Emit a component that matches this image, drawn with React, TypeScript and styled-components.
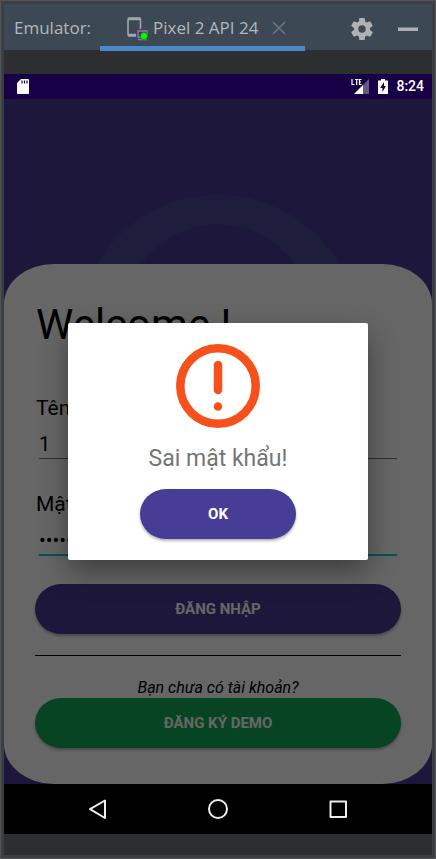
import React, { useState } from "react";
import styled, { createGlobalStyle } from "styled-components";

const GlobalStyle = createGlobalStyle`
  *, *::before, *::after { box-sizing: border-box; }
  body { margin: 0; background: #3c3f41; }
  button, input { font-family: inherit; }
`;

const Window = styled.div`
  display: flex;
  flex-direction: column;
  min-height: 100vh;
  padding: 3px;
  border: 1px solid #515456;
  background: #3c3f41;
  font-family: Roboto, "Noto Sans", sans-serif;
`;

const Toolbar = styled.header`
  display: flex;
  align-items: stretch;
  height: 46px;
  padding: 0 13px 0 10px;
  background: #3d4855;
  color: #b4b7ba;
  font: 400 17px/24px "Open Sans", "Noto Sans", sans-serif;
`;

const ToolTitle = styled.span`
  align-self: center;
  width: 86px;
  padding-top: 2px;
  white-space: nowrap;
`;

const Tab = styled.div`
  display: flex;
  align-items: center;
  width: 205px;
  height: 47px;
  padding: 5px 0 0 26px;
  border-bottom: 5px solid #4a88c7;
  white-space: nowrap;
  z-index: 1;
`;

const TabLabel = styled.span`
  flex: 1;
  margin-left: 5px;
`;

const IconButton = styled.button`
  display: flex;
  align-items: center;
  justify-content: center;
  padding: 0;
  border: 0;
  background: none;
  color: inherit;
  cursor: pointer;
`;

const TabClose = styled(IconButton)`
  margin-right: 18px;
`;

const ToolActions = styled.div`
  display: flex;
  align-items: center;
  gap: 24px;
  margin-left: auto;
  padding-top: 3px;
`;

const Stage = styled.main`
  display: flex;
  flex: 1;
  flex-direction: column;
  padding: 24px 0 21px;
  background: #2d2e30;
`;

const StatusBar = styled.div`
  display: flex;
  align-items: center;
  height: 25px;
  padding: 0 8px 0 13px;
  background: #180046;
  color: #fff;
  font: 500 14px/25px Roboto, sans-serif;
`;

const StatusRight = styled.div`
  display: flex;
  align-items: center;
  gap: 8px;
  margin-left: auto;
`;

const Screen = styled.div`
  position: relative;
  display: flex;
  flex: 1;
  flex-direction: column;
  padding-top: 165px;
  overflow: hidden;
  background: #4a3d94;
`;

const Backdrop = styled.svg`
  position: absolute;
  top: 96px;
  left: 50%;
  transform: translateX(-50%);
`;

const Card = styled.form`
  position: relative;
  display: flex;
  flex: 1;
  flex-direction: column;
  padding: 36px 31px;
  border-radius: 50px / 40px;
  background: #fff;
  color: #000;
`;

const Heading = styled.h1`
  margin: 0 0 45px;
  padding-left: 1px;
  font-size: 42px;
  line-height: 50px;
  font-weight: 400;
`;

const Label = styled.label`
  padding-left: 1px;
  font-size: 21px;
  line-height: 26px;
`;

const Field = styled.input<{ $active?: boolean }>`
  height: ${(p) => (p.$active ? 39 : 38)}px;
  margin: 0 4px ${(p) => (p.$active ? 28 : 32)}px;
  padding: 8px 0 0;
  border: 0;
  border-bottom: ${(p) => (p.$active ? "2px solid #03dac5" : "1px solid #757575")};
  outline: 0;
  background: none;
  color: #000;
  font-size: 20px;
`;

const PillButton = styled.button<{ $tone: string; $width?: string }>`
  width: ${(p) => p.$width ?? "100%"};
  height: 50px;
  flex: none;
  padding: 0;
  border: 0;
  border-radius: 26px / 25px;
  background: ${(p) => p.$tone};
  box-shadow: 0 2px 3px rgba(0, 0, 0, 0.3);
  color: #fff;
  font-size: 15px;
  font-weight: 700;
  cursor: pointer;
`;

const Divider = styled.hr`
  width: 100%;
  height: 1px;
  margin: 21px 0 22px;
  border: 0;
  background: #000;
`;

const Hint = styled.p`
  margin: 0;
  font-size: 16px;
  line-height: 20px;
  font-style: italic;
  text-align: center;
`;

const Scrim = styled.div`
  position: absolute;
  inset: 0;
  display: flex;
  align-items: center;
  justify-content: center;
  background: rgba(0, 0, 0, 0.6);
`;

const Dialog = styled.section`
  display: flex;
  flex-direction: column;
  align-items: center;
  width: 70%;
  min-width: 300px;
  padding: 21px 20px;
  border-radius: 2px;
  background: #fff;
  box-shadow: 0 12px 28px rgba(0, 0, 0, 0.4);
`;

const Message = styled.p`
  margin: 15px 0 14px;
  color: #757575;
  font-size: 23px;
  line-height: 32px;
`;

const NavBar = styled.nav`
  display: flex;
  align-items: center;
  justify-content: center;
  gap: 90px;
  height: 50px;
  background: #000;
  color: #eee;
`;

const DeviceIcon = () => (
  <svg width="22" height="26" viewBox="0 0 22 26" aria-hidden="true">
    <path d="M14.5 14V4.500Q14.500 3 13 3H3.500Q2 3 2 4.500V19.500Q2 21 3.500 21H10" fill="none" stroke="#9aa7b0" strokeWidth="1.600" />
    <path d="M2 4h12.500M2 20h8" stroke="#9aa7b0" strokeWidth="2.500" />
    <path d="M12 16h9v6h-9zM12 24.500h9" fill="#46345f" stroke="#9876aa" strokeWidth="1.300" />
    <circle cx="18" cy="21" r="3.700" fill="#0f0" stroke="#284a35" strokeWidth="0.600" />
  </svg>
);

const GearIcon = () => (
  <svg width="22" height="22" viewBox="-11 -11 22 22" fill="#afb1b3" aria-hidden="true">
    {[0, 60, 120].map((a) => (
      <path key={a} d="M-2.600 -11H2.600L3.500 -6V6L2.600 11H-2.600L-3.500 6V-6Z" transform={`rotate(${a})`} />
    ))}
    <circle r="8" />
    <circle r="3.700" fill="#3d4855" />
  </svg>
);

const SignalIcon = () => (
  <svg width="19" height="17" viewBox="0 0 19 17" fill="none" aria-hidden="true">
    <path d="M18 1V16H3Z" fill="#665985" />
    <path d="M12 7V16H3Z" fill="#fff" />
    <path d="M0 0H11V8H0Z" fill="#180046" />
    <path d="M1 1V6.500H3.500M4 1.500H7.500M5.700 1.500V7M10.500 1.500H8.500V6.500H10.500M8.500 4H10" stroke="#fff" strokeWidth="1.200" />
  </svg>
);

export default function App() {
  const [open, setOpen] = useState(true);
  const [user, setUser] = useState("1");
  const [password, setPassword] = useState("123456");

  return (
    <Window>
      <GlobalStyle />
      <Toolbar>
        <ToolTitle>Emulator:</ToolTitle>
        <Tab>
          <DeviceIcon />
          <TabLabel>Pixel 2 API 24</TabLabel>
          <TabClose aria-label="Close tab">
            <svg width="16" height="16" viewBox="0 0 16 16" stroke="#6f7881" strokeWidth="1.500">
              <path d="M2 2L14 14M14 2L2 14" />
            </svg>
          </TabClose>
        </Tab>
        <ToolActions>
          <IconButton aria-label="Settings"><GearIcon /></IconButton>
          <IconButton aria-label="Minimize">
            <svg width="22" height="22" viewBox="0 0 22 22"><path d="M1 9.500H21V13H1Z" fill="#afb1b3" /></svg>
          </IconButton>
        </ToolActions>
      </Toolbar>
      <Stage>
        <StatusBar>
          <svg width="12" height="15" viewBox="0 0 12 15" aria-hidden="true">
            <path d="M4 0H11Q12 0 12 1V14Q12 15 11 15H1Q0 15 0 14V4Z" fill="#fff" />
            <path d="M5 1.500V4.500M7.500 1.500V4.500M10 1.500V4.500" stroke="#180046" strokeWidth="1.200" />
          </svg>
          <StatusRight>
            <SignalIcon />
            <svg width="10" height="15" viewBox="0 0 10 15" aria-hidden="true">
              <path d="M3 0H7V1.500H10V15H0V1.500H3Z" fill="#fff" />
              <path d="M6 3L2.200 9H4.400V13L8 7H6Z" fill="#180046" />
            </svg>
            <span>8:24</span>
          </StatusRight>
        </StatusBar>
        <Screen>
          <Backdrop width="282" height="282" viewBox="0 0 282 282" aria-hidden="true">
            <circle cx="141" cy="141" r="141" fill="#4d4c96" />
            <circle cx="141" cy="123" r="94" fill="#4a3d94" />
          </Backdrop>
          <Card onSubmit={(e) => { e.preventDefault(); setOpen(true); }}>
            <Heading>Welcome !</Heading>
            <Label htmlFor="user">Tên đăng nhập</Label>
            <Field id="user" value={user} onChange={(e) => setUser(e.target.value)} />
            <Label htmlFor="password">Mật khẩu</Label>
            <Field id="password" type="password" $active value={password} onChange={(e) => setPassword(e.target.value)} />
            <PillButton type="submit" $tone="#4a3d94">ĐĂNG NHẬP</PillButton>
            <Divider />
            <Hint>Bạn chưa có tài khoản?</Hint>
            <PillButton type="button" $tone="#10ab58">ĐĂNG KÝ DEMO</PillButton>
          </Card>
          {open && (
            <Scrim>
              <Dialog role="alertdialog" aria-modal="true" aria-labelledby="message">
                <svg width="84" height="84" viewBox="0 0 84 84" fill="none" stroke="#f6511d" strokeWidth="8.500" strokeLinecap="round" aria-hidden="true">
                  <circle cx="42" cy="42" r="37.700" />
                  <path d="M42 21V46M42 62.500V62.600" />
                </svg>
                <Message id="message">Sai mật khẩu!</Message>
                <PillButton type="button" $tone="#483d96" $width="156px" onClick={() => setOpen(false)}>OK</PillButton>
              </Dialog>
            </Scrim>
          )}
        </Screen>
        <NavBar aria-label="System">
          <IconButton aria-label="Back">
            <svg width="30" height="30" viewBox="0 0 30 30" fill="none" stroke="currentColor" strokeWidth="2" strokeLinejoin="round"><path d="M22 6.500V24L7 15.200Z" /></svg>
          </IconButton>
          <IconButton aria-label="Home">
            <svg width="30" height="30" viewBox="0 0 30 30" fill="none" stroke="currentColor" strokeWidth="2"><circle cx="15" cy="15" r="9" /></svg>
          </IconButton>
          <IconButton aria-label="Recent apps">
            <svg width="30" height="30" viewBox="0 0 30 30" fill="none" stroke="currentColor" strokeWidth="2" strokeLinejoin="round"><path d="M7.500 7.500H23V23H7.500Z" /></svg>
          </IconButton>
        </NavBar>
      </Stage>
    </Window>
  );
}
